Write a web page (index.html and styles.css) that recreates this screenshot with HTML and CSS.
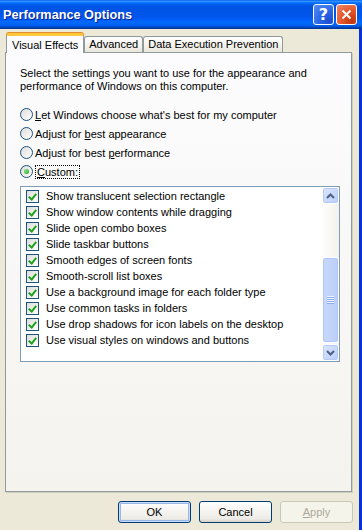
FILE: index.html
```html
<!DOCTYPE html>
<html lang="en">
<head>
    <meta charset="UTF-8">
    <title>Performance Options</title>
    <link rel="stylesheet" href="styles.css">
</head>
<body>
    <div class="window">
        <div class="titlebar">
            <span class="title">Performance Options</span>
            <div class="caption-buttons">
                <div class="cap help">?</div>
                <div class="cap close">
                    <svg width="11" height="11" viewBox="0 0 11 11"><path d="M1.5 1.5 L9.5 9.5 M9.5 1.5 L1.5 9.5" stroke="#fff" stroke-width="2" fill="none"/></svg>
                </div>
            </div>
        </div>

        <div class="client">
            <div class="tabs">
                <div class="tab active">Visual Effects</div>
                <div class="tab">Advanced</div>
                <div class="tab">Data Execution Prevention</div>
            </div>

            <div class="panel">
                <p class="intro">Select the settings you want to use for the appearance and<br>performance of Windows on this computer.</p>

                <div class="options">
                    <div class="radio"><span class="radio-mark"></span><span><u>L</u>et Windows choose what's best for my computer</span></div>
                    <div class="radio"><span class="radio-mark"></span><span>Adjust for <u>b</u>est appearance</span></div>
                    <div class="radio"><span class="radio-mark"></span><span>Adjust for best <u>p</u>erformance</span></div>
                    <div class="radio"><span class="radio-mark checked"></span><span class="focus"><u>C</u>ustom:</span></div>
                </div>

                <div class="listbox">
                    <ul class="items">
                        <li><span class="check"></span>Show translucent selection rectangle</li>
                        <li><span class="check"></span>Show window contents while dragging</li>
                        <li><span class="check"></span>Slide open combo boxes</li>
                        <li><span class="check"></span>Slide taskbar buttons</li>
                        <li><span class="check"></span>Smooth edges of screen fonts</li>
                        <li><span class="check"></span>Smooth-scroll list boxes</li>
                        <li><span class="check"></span>Use a background image for each folder type</li>
                        <li><span class="check"></span>Use common tasks in folders</li>
                        <li><span class="check"></span>Use drop shadows for icon labels on the desktop</li>
                        <li><span class="check"></span>Use visual styles on windows and buttons</li>
                    </ul>
                    <div class="scrollbar">
                        <div class="sb-btn">
                            <svg width="9" height="6" viewBox="0 0 9 6"><path d="M1 5 L4.5 1.5 L8 5" stroke="#4D6185" stroke-width="2" fill="none"/></svg>
                        </div>
                        <div class="sb-track">
                            <div class="sb-thumb"><span class="grip"></span></div>
                        </div>
                        <div class="sb-btn">
                            <svg width="9" height="6" viewBox="0 0 9 6"><path d="M1 1 L4.5 4.5 L8 1" stroke="#4D6185" stroke-width="2" fill="none"/></svg>
                        </div>
                    </div>
                </div>
            </div>

            <div class="buttons">
                <div class="btn default">OK</div>
                <div class="btn">Cancel</div>
                <div class="btn disabled"><u>A</u>pply</div>
            </div>
        </div>
    </div>
</body>
</html>
```

FILE: styles.css
```css
* {
    box-sizing: border-box;
}

body {
    margin: 0;
    width: 362px;
    height: 530px;
    overflow: hidden;
    font-family: "Liberation Sans", Arial, sans-serif;
    font-size: 11px;
    color: #000;
}

.window {
    display: flex;
    flex-direction: column;
    height: 530px;
}

/* title bar */
.titlebar {
    height: 29px;
    flex: none;
    display: flex;
    align-items: center;
    justify-content: space-between;
    padding: 0 5px 0 3px;
    background: linear-gradient(to bottom, #0058EE 0%, #3593FF 4%, #288EFF 6%, #127DFF 8%, #036FFC 10%, #0262EE 14%, #0057E5 20%, #0054E3 24%, #0055EB 56%, #005BF5 66%, #026AFE 76%, #0062EF 86%, #0052D6 92%, #0040AB 96%, #003092 100%);
}

.title {
    color: #fff;
    font-weight: bold;
    font-size: 12.7px;
    text-shadow: 1px 1px 0 #0A1E8C;
}

.caption-buttons {
    display: flex;
    gap: 2px;
}

.cap {
    width: 21px;
    height: 21px;
    border: 1px solid #fff;
    border-radius: 3px;
    display: flex;
    align-items: center;
    justify-content: center;
    color: #fff;
}

.help {
    background: radial-gradient(circle at 80% 85%, #1D4ED0 0%, #2A66E6 45%, #5C8FF2 100%);
    font-family: "DejaVu Sans", sans-serif;
    font-weight: bold;
    font-size: 16px;
}

.close {
    background: radial-gradient(circle at 80% 85%, #C2360F 0%, #E25428 45%, #F08A6C 100%);
}

/* client area */
.client {
    flex: 1;
    display: flex;
    flex-direction: column;
    background: #ECE9D8;
    border-right: 3px solid #0831D9;
    padding: 4px 7px 7px 5px;
}

.tabs {
    height: 20px;
    display: flex;
    align-items: flex-end;
    padding-left: 1px;
    margin-bottom: -1px;
}

.tab {
    height: 16px;
    margin-bottom: 1px;
    padding: 1px 4px 0;
    line-height: 13px;
    border: 1px solid #919B9C;
    border-bottom: none;
    border-radius: 3px 3px 0 0;
    background: linear-gradient(to bottom, #FFFFFF, #F3F2EC 60%, #E8E6DC);
    white-space: nowrap;
}

.tab.active {
    height: 20px;
    margin-bottom: 0;
    padding: 3px 5px 0;
    border-top: 3px solid #FFC83C;
    box-shadow: 0 -1px 0 #E68B2C;
    background: #FCFCFE;
    position: relative;
    z-index: 1;
}

.panel {
    flex: 1;
    border: 1px solid #919B9C;
    box-shadow: 1px 1px 0 #D0CEBF;
    background: linear-gradient(to bottom, #FCFCFE, #F4F3EE);
    padding: 14px 11px 0 14px;
}

.intro {
    margin: 0;
    line-height: 13px;
}

.options {
    margin-top: 12px;
}

.radio {
    height: 19px;
    display: flex;
    align-items: center;
    gap: 2px;
}

.radio-mark {
    width: 13px;
    height: 13px;
    flex: none;
    border: 1px solid #1C5180;
    border-radius: 50%;
    background: linear-gradient(135deg, #DCDCD7, #FFFFFF);
    display: flex;
    align-items: center;
    justify-content: center;
}

.radio-mark.checked::after {
    content: "";
    width: 5px;
    height: 5px;
    border-radius: 50%;
    background: radial-gradient(circle at 35% 35%, #7BE57A, #21A121);
}

.focus {
    outline: 1px dotted #000;
    padding: 0 1px;
    margin-left: 1px;
}

/* list with checkboxes */
.listbox {
    margin-top: 5px;
    height: 176px;
    border: 1px solid #7F9DB9;
    background: #fff;
    display: flex;
}

.items {
    flex: 1;
    list-style: none;
    margin: 0;
    padding: 1px 0 0 5px;
}

.items li {
    height: 16px;
    display: flex;
    align-items: center;
    white-space: nowrap;
}

.check {
    width: 13px;
    height: 13px;
    flex: none;
    margin-right: 7px;
    border: 1px solid #1C5180;
    background: linear-gradient(135deg, #DCDCD7, #FFFFFF);
    position: relative;
}

.check::after {
    content: "";
    position: absolute;
    left: 3px;
    top: 1px;
    width: 3px;
    height: 6px;
    border: solid #21A121;
    border-width: 0 2px 2px 0;
    transform: rotate(40deg);
}

.scrollbar {
    width: 17px;
    flex: none;
    display: flex;
    flex-direction: column;
    background: linear-gradient(to right, #FEFEFB, #F3F1EC);
}

.sb-btn {
    height: 17px;
    flex: none;
    border: 1px solid #fff;
    border-radius: 3px;
    background: linear-gradient(135deg, #DCE6FD, #B9CEF9);
    box-shadow: inset 0 0 0 1px #B4C8F6;
    display: flex;
    align-items: center;
    justify-content: center;
}

.sb-track {
    flex: 1;
    display: flex;
    flex-direction: column;
    justify-content: flex-end;
    padding-bottom: 1px;
}

.sb-thumb {
    height: 86px;
    border: 1px solid #fff;
    border-radius: 3px;
    background: linear-gradient(to right, #C8D8FC, #BACEF9);
    box-shadow: inset 0 0 0 1px #AFC5F5;
    display: flex;
    align-items: center;
    justify-content: center;
}

.grip {
    width: 7px;
    height: 8px;
    background: repeating-linear-gradient(to bottom, #EEF3FE 0 1px, #8CADEF 1px 2px);
}

/* dialog buttons */
.buttons {
    flex: none;
    height: 22px;
    margin: 9px -1px 0 0;
    display: flex;
    justify-content: flex-end;
    gap: 8px;
}

.btn {
    width: 73px;
    height: 22px;
    border: 1px solid #003C74;
    border-radius: 3px;
    background: linear-gradient(to bottom, #FFFFFF 0%, #F5F4F0 45%, #ECEBE6 85%, #D6D0C5 100%);
    display: flex;
    align-items: center;
    justify-content: center;
}

.btn.default {
    box-shadow: inset 0 0 0 1px #C8DCF8, inset 0 0 0 2px #98B8EA;
}

.btn.disabled {
    border-color: #C9C7BA;
    background: #F5F4EA;
    color: #ACA899;
}
```
